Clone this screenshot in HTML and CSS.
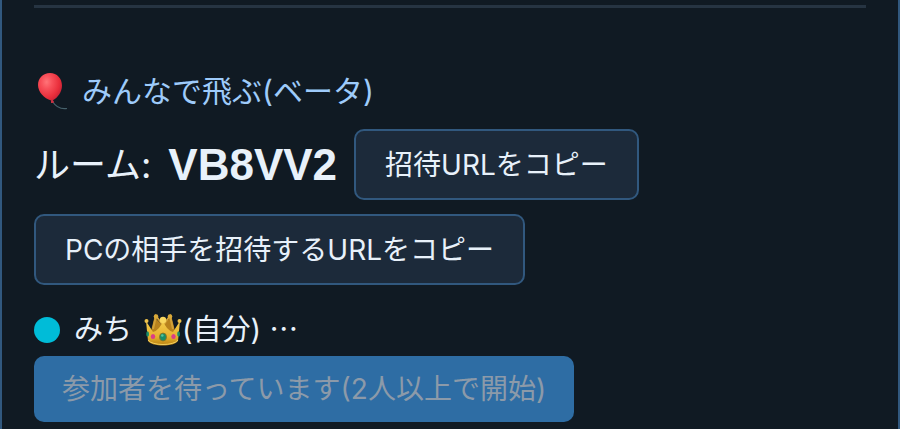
FILE: index.html
```html
<!DOCTYPE html>
<html lang="ja">
<head>
  <meta charset="UTF-8" />
  <title>みんなで飛ぶ</title>
  <link rel="stylesheet" href="styles.css">
</head>
<body>
  <main class="panel">
    <hr class="divider">

    <h2 class="title">
      <svg class="balloon" viewBox="0 0 34 40" aria-hidden="true">
        <defs>
          <radialGradient id="balloonFill" cx="0.36" cy="0.3" r="0.75">
            <stop offset="0" stop-color="#ff7478" />
            <stop offset="0.3" stop-color="#f8505a" />
            <stop offset="0.7" stop-color="#e92e3b" />
            <stop offset="1" stop-color="#b91f35" />
          </radialGradient>
        </defs>
        <path d="M18.5 30.5C21 34.500 26 38.500 33 37.500" fill="none" stroke="#46616b" stroke-width="1.200" />
        <path d="M16 2C23 2 28 7.500 28 14.500C28 21 23.500 27 18.800 29.300L20 31.500L17 32L17.200 29.400C10 27.500 4 21 4 14C4 7 9 2 16 2Z" fill="url(#balloonFill)" />
        <path d="M17.200 29.300L19 29.300L20 31.500L17 32Z" fill="#c93445" />
      </svg>
      <span>みんなで飛ぶ(ベータ)</span>
    </h2>

    <div class="room">
      <span class="room-label">ルーム:</span>
      <strong class="room-code">VB8VV2</strong>
      <button type="button" class="copy">招待URLをコピー</button>
      <button type="button" class="copy">PCの相手を招待するURLをコピー</button>
    </div>

    <div class="player">
      <span class="dot"></span>
      <span class="name">みち</span>
      <svg class="crown" viewBox="0 0 38 34" aria-hidden="true">
        <defs>
          <linearGradient id="crownFill" x1="0" y1="0" x2="0" y2="1">
            <stop offset="0" stop-color="#f4ce4e" />
            <stop offset="0.65" stop-color="#e6b12e" />
            <stop offset="1" stop-color="#b98212" />
          </linearGradient>
        </defs>
        <path d="M6 22L10.500 4L18 12L27.500 4L32 22Z" fill="#b8821d" />
        <path d="M9 16L12 3L18 11M29 16L26 3L20 11" fill="none" stroke="#d3a237" stroke-width="2" />
        <circle cx="12" cy="3.500" r="2.300" fill="#d9a93a" />
        <circle cx="26" cy="3.500" r="2.300" fill="#d9a93a" />
        <path d="M2 8L9 19Q16 17 19 7Q22 17 29 19L36 8L34 28C30 34 8 34 4 28Z" fill="url(#crownFill)" />
        <path d="M4 27C8 33 30 33 34 27" fill="none" stroke="#f2cf60" stroke-width="1" />
        <circle cx="2.500" cy="8" r="2" fill="#efc34b" />
        <circle cx="19" cy="7" r="3.200" fill="#f8d75f" />
        <circle cx="35.500" cy="8" r="2" fill="#efc34b" />
        <ellipse cx="19" cy="24" rx="3.500" ry="4" fill="#178d69" stroke="#967118" stroke-width="0.800" />
        <ellipse cx="18.300" cy="22.500" rx="1.300" ry="1.300" fill="#55c39c" />
        <ellipse cx="9" cy="23.500" rx="2.200" ry="2.600" fill="#dc3d87" />
        <ellipse cx="29.500" cy="23.500" rx="2.200" ry="2.600" fill="#dc3d87" />
        <ellipse cx="3.600" cy="21" rx="1.400" ry="2.800" fill="#178d69" />
        <ellipse cx="34.600" cy="21" rx="1.400" ry="2.800" fill="#178d69" />
      </svg>
      <span>(自分) ⋯</span>
    </div>

    <button type="button" class="start" disabled>参加者を待っています(2人以上で開始)</button>
  </main>
</body>
</html>
```

FILE: styles.css
```css
* {
  box-sizing: border-box;
}

body {
  margin: 0;
  background-color: #101a23;
  color: #e8f1fa;
  font-family: Inter, "Noto Sans CJK JP", sans-serif;
  font-size: 28px;
  line-height: 40px;
}

.panel {
  min-height: 100vh;
  padding: 5px 32px 7px;
  border: solid #31587e;
  border-width: 0 2px;
}

.divider {
  height: 3px;
  margin: 0;
  border: 0;
  background-color: #263442;
}

.title {
  display: flex;
  align-items: center;
  gap: 14px;
  margin: 63px 0 18px;
  color: #9ecbfa;
  font-size: 30px;
  font-weight: 400;
}

.balloon {
  width: 34px;
  height: 40px;
}

.room {
  display: flex;
  flex-wrap: wrap;
  align-items: center;
  gap: 14px 17px;
}

.room-label {
  font-size: 36px;
}

.room-code {
  font-family: "Liberation Sans", sans-serif;
  font-size: 44px;
}

button {
  border-radius: 10px;
  font: inherit;
}

.copy {
  padding: 14px 29px 13px;
  border: 2px solid #31587e;
  background-color: #1c2a3a;
  color: #e8f1fa;
}

.player {
  display: flex;
  align-items: center;
  margin-top: 25px;
  font-size: 29px;
}

.dot {
  width: 26px;
  height: 26px;
  border-radius: 50%;
  background-color: #00bcd8;
}

.name {
  margin: 0 12px 0 14px;
}

.crown {
  width: 38px;
  height: 34px;
}

.start {
  margin-top: 6px;
  padding: 13px 28px;
  border: 0;
  background-color: #2e6da4;
  color: #8c9aa9;
}
```
